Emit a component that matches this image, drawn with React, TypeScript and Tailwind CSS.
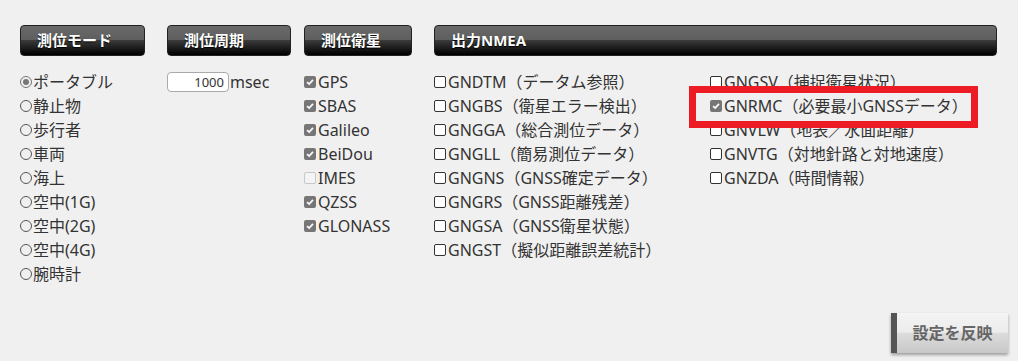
import React from "react";

const modes = ["ポータブル", "静止物", "歩行者", "車両", "海上", "空中(1G)", "空中(2G)", "空中(4G)", "腕時計"];

const sats = [
  { label: "GPS", on: true },
  { label: "SBAS", on: true },
  { label: "Galileo", on: true },
  { label: "BeiDou", on: true },
  { label: "IMES", on: false, disabled: true },
  { label: "QZSS", on: true },
  { label: "GLONASS", on: true },
];

const nmeaLeft = [
  "GNDTM（データム参照）",
  "GNGBS（衛星エラー検出）",
  "GNGGA（総合測位データ）",
  "GNGLL（簡易測位データ）",
  "GNGNS（GNSS確定データ）",
  "GNGRS（GNSS距離残差）",
  "GNGSA（GNSS衛星状態）",
  "GNGST（擬似距離誤差統計）",
];

const nmeaRight = [
  { label: "GNGSV（捕捉衛星状況）", on: false },
  { label: "GNRMC（必要最小GNSSデータ）", on: true },
  { label: "GNVLW（地表／水面距離）", on: false },
  { label: "GNVTG（対地針路と対地速度）", on: false },
  { label: "GNZDA（時間情報）", on: false },
];

function Header({ title }: { title: string }) {
  return (
    <div className="h-[31px] rounded-[4px] border border-[#222] bg-[linear-gradient(#6a6a6a_0%,#5e5e5e_48%,#3a3a3a_50%,#000_100%)] pl-4 flex items-center text-white font-bold text-[15px] [text-shadow:0_1px_1px_#000]">
      {title}
    </div>
  );
}

function Radio({ checked }: { checked: boolean }) {
  return (
    <span
      className={
        checked
          ? "w-3 h-3 rounded-full border border-[#777] flex items-center justify-center mr-px"
          : "w-3 h-3 rounded-full border border-[#555] mr-px"
      }
    >
      {checked && <span className="w-[6px] h-[6px] rounded-full bg-[#777]" />}
    </span>
  );
}

function Check({ checked, disabled }: { checked: boolean; disabled?: boolean }) {
  if (checked) {
    return (
      <span className="w-3 h-3 rounded-[2px] bg-[#767676] flex items-center justify-center mr-[2px]">
        <svg viewBox="0 0 12 12" className="w-[10px] h-[10px]">
          <path d="M2.5 6.2 L5 8.6 L9.6 3.4" stroke="#fff" strokeWidth="2" fill="none" />
        </svg>
      </span>
    );
  }
  return (
    <span
      className={
        disabled
          ? "w-3 h-3 rounded-[2px] border border-[#c8c8c8] bg-[#f4f4f4] mr-[2px]"
          : "w-3 h-3 rounded-[2px] border border-[#333] bg-white mr-[2px]"
      }
    />
  );
}

export default function App() {
  return (
    <div className="relative w-[1018px] h-[361px] bg-[#f0f0f0] text-[#333] text-[16px] font-['Noto_Sans','Noto_Sans_CJK_JP',sans-serif] overflow-hidden">
      <div className="flex pt-[25px]">
        <div className="ml-[20px] w-[125px]">
          <Header title="測位モード" />
          <div className="mt-[14px]">
            {modes.map((m, i) => (
              <div key={m} className="h-6 flex items-center">
                <Radio checked={i === 0} />
                {m}
              </div>
            ))}
          </div>
        </div>

        <div className="ml-[22px] w-[124px]">
          <Header title="測位周期" />
          <div className="mt-[14px] h-6 flex items-center">
            <input
              readOnly
              value="1000"
              className="w-[62px] h-[20px] bg-white border border-[#aaa] rounded-[4px] text-right pr-1 text-[13px] text-[#333] outline-none"
            />
            <span className="ml-px">msec</span>
          </div>
        </div>

        <div className="ml-[13px] w-[108px]">
          <Header title="測位衛星" />
          <div className="mt-[14px]">
            {sats.map((s) => (
              <div key={s.label} className="h-6 flex items-center">
                <Check checked={s.on} disabled={s.disabled} />
                {s.label}
              </div>
            ))}
          </div>
        </div>

        <div className="ml-[22px] w-[563px]">
          <Header title="出力NMEA" />
          <div className="mt-[14px] flex">
            <div className="w-[276px]">
              {nmeaLeft.map((n) => (
                <div key={n} className="h-6 flex items-center whitespace-nowrap">
                  <Check checked={false} />
                  {n}
                </div>
              ))}
            </div>
            <div>
              {nmeaRight.map((n) => (
                <div key={n.label} className="h-6 flex items-center whitespace-nowrap">
                  <Check checked={n.on} />
                  {n.label}
                </div>
              ))}
            </div>
          </div>
        </div>
      </div>

      <div className="flex justify-end pr-[10px] mt-[27px]">
        <button className="w-[117px] h-[40px] border-l-[6px] border-[#555] bg-[linear-gradient(#f4f4f4_0%,#ececec_48%,#dcdcdc_50%,#c8c8c8_100%)] shadow-[0_2px_3px_rgba(0,0,0,0.35)] text-[#666] font-bold text-[16px]">
          設定を反映
        </button>
      </div>

      {/* annotation box */}
      <div className="absolute left-[689px] top-[86px] w-[289px] h-[42px] border-[7px] border-[#ed1c24] pointer-events-none" />
    </div>
  );
}
